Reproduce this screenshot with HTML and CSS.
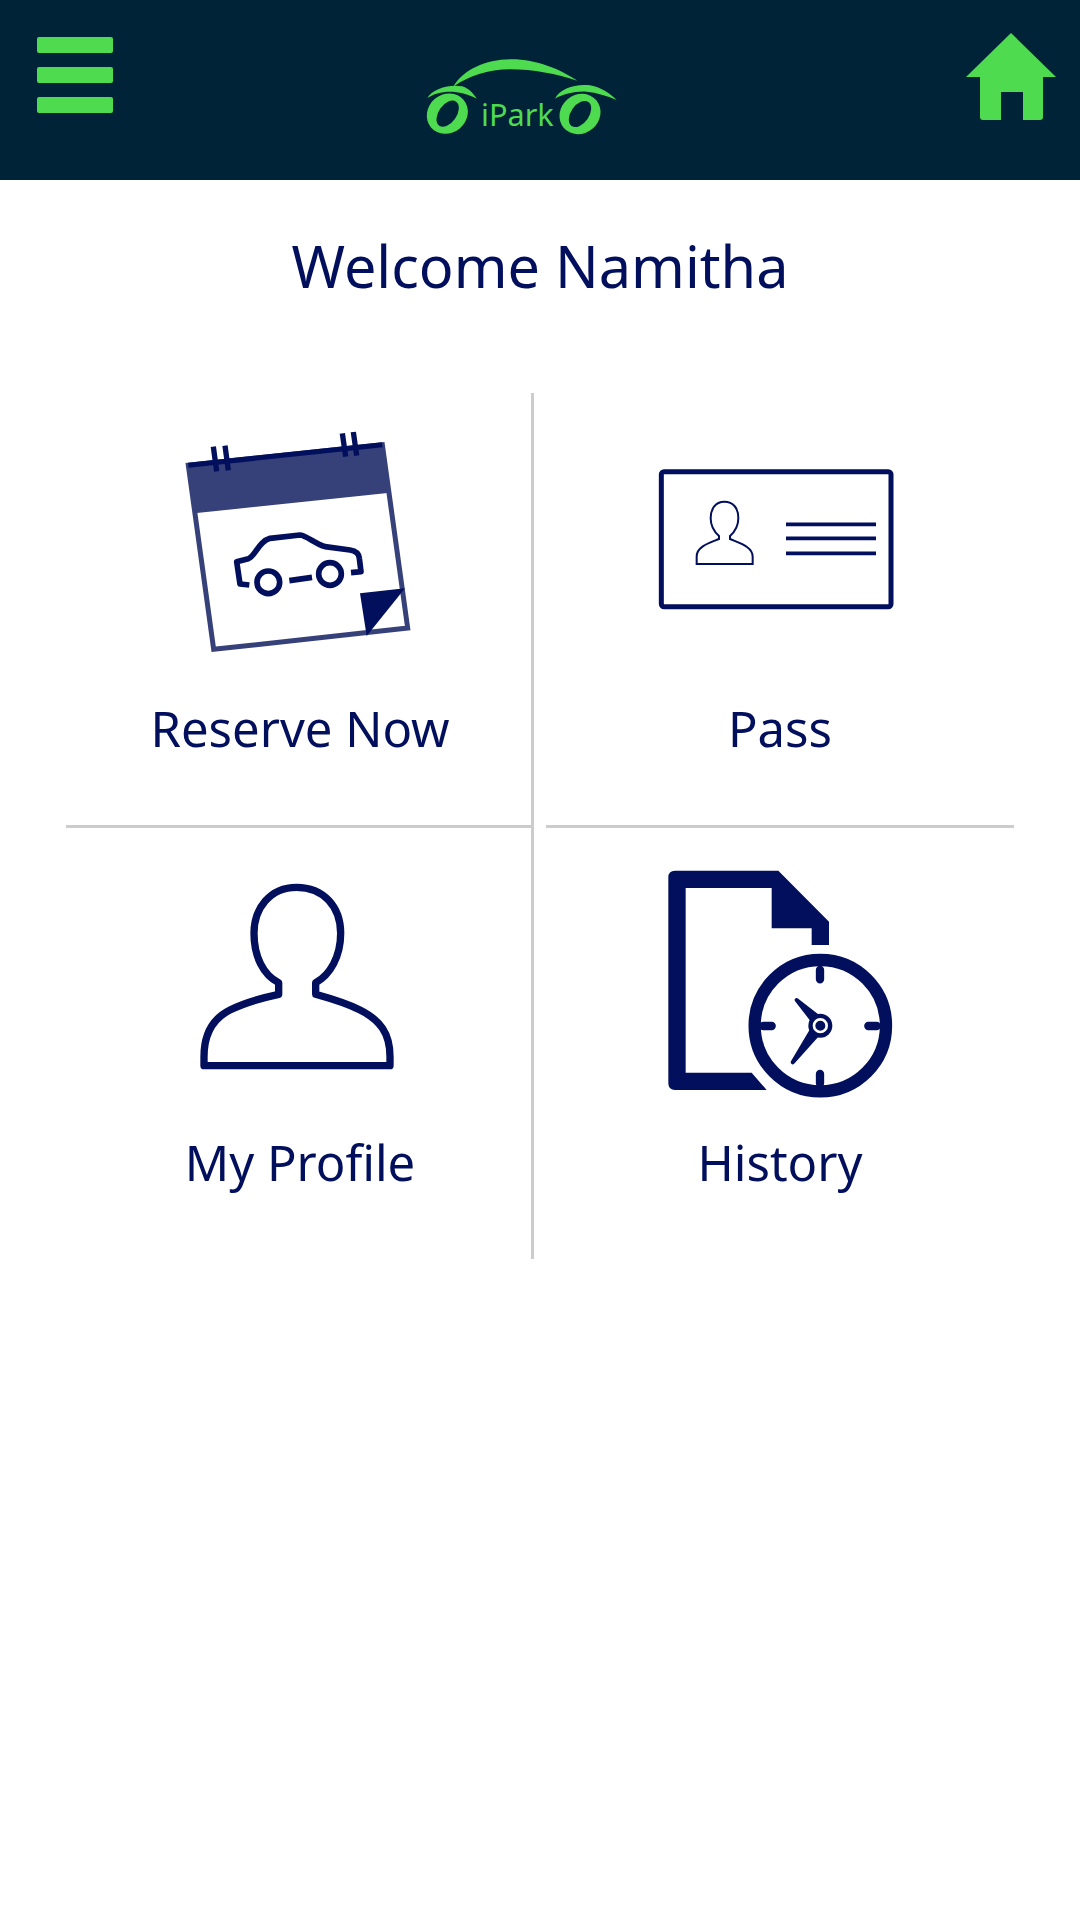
FILE: index.html
```html
<!DOCTYPE html>
<html lang="en">
<head>
    <meta charset="UTF-8">
    <meta name="viewport" content="width=device-width, initial-scale=1.0">
    <title>iPark</title>
    <link rel="stylesheet" href="styles.css">
</head>
<body>
    <header class="topbar">
        <div class="burger">
            <span></span>
            <span></span>
            <span></span>
        </div>
        <svg class="logo" viewBox="0 0 720 330">
            <path class="logo-green" d="M160 140C190 88 260 58 335 58C410 58 480 88 532 122C470 102 400 88 330 88C265 88 205 108 160 140Z"/>
            <path class="logo-green" d="M82 174C98 146 150 132 186 139C205 144 220 160 230 176C205 162 175 155 150 155C122 155 100 162 82 174Z"/>
            <path class="logo-green" d="M465 176C480 144 530 130 570 136C605 143 630 160 650 180C620 167 590 158 560 155C525 153 490 162 465 176Z"/>
            <ellipse class="logo-green" cx="142" cy="221" rx="64" ry="58" transform="rotate(-40 142 221)"/>
            <ellipse class="logo-hole" cx="143" cy="221" rx="44" ry="27" transform="rotate(-55 143 221)"/>
            <ellipse class="logo-green" cx="540" cy="222" rx="64" ry="58" transform="rotate(-40 540 222)"/>
            <ellipse class="logo-hole" cx="540" cy="222" rx="44" ry="27" transform="rotate(-55 540 222)"/>
            <text class="logo-text" x="243" y="258">iPark</text>
        </svg>
        <svg class="home" viewBox="0 0 90 87">
            <path d="M45 0L90 44H77V84Q77 87 74 87H57V59H35V87H17Q14 87 14 84V44H0Z"/>
        </svg>
    </header>

    <main class="content">
        <h1>Welcome Namitha</h1>
        <div class="tiles">
            <a class="tile tile-top tile-left">
                <svg class="icon-wide" viewBox="0 0 840 780">
                    <path d="M103 310L690 248L667 104L85 166Z" fill="#364079"/>
                    <path d="M85 166L161 718L743 654L667 104Z" fill="none" stroke="#364079" stroke-width="15"/>
                    <path d="M85 166L667 104" fill="none" stroke="#010f5c" stroke-width="15"/>
                    <path d="M160 110L170 184M195 107L205 181M547 70L557 140M580 66L590 137" fill="none" stroke="#010f5c" stroke-width="16"/>
                    <path d="M268 525L240 522L230 455L265 446C285 440 295 395 330 385L420 375C435 375 465 400 495 410L570 420C590 423 597 432 598 445L603 485L573 488" fill="none" stroke="#010f5c" stroke-width="17" stroke-linejoin="round"/>
                    <circle cx="325" cy="517" r="34" fill="none" stroke="#010f5c" stroke-width="17"/>
                    <circle cx="510" cy="492" r="34" fill="none" stroke="#010f5c" stroke-width="17"/>
                    <path d="M388 512L456 502" fill="none" stroke="#010f5c" stroke-width="17"/>
                    <path d="M600 550L735 535L620 678Z" fill="#010f5c"/>
                </svg>
                <span class="tile-label">Reserve Now</span>
            </a>
            <a class="tile tile-top">
                <svg class="icon-wide" viewBox="0 -120 840 780">
                    <rect x="64" y="65" width="689" height="405" rx="8" fill="none" stroke="#010f5c" stroke-width="15"/>
                    <path d="M170 342H338V320C338 290 300 280 270 267V258C285 245 295 225 295 205C295 175 280 155 253 155C225 155 212 178 212 205C212 225 222 245 237 258V267C205 280 170 290 170 320Z" fill="none" stroke="#010f5c" stroke-width="6"/>
                    <path d="M438 223H708M438 265H708M438 310H708" fill="none" stroke="#010f5c" stroke-width="11"/>
                </svg>
                <span class="tile-label">Pass</span>
            </a>
            <a class="tile tile-bottom tile-left">
                <svg class="icon-person" viewBox="0 0 720 720">
                    <path d="M72 617H630V590C630 520 600 480 540 450C500 430 450 415 407 403V368C450 345 482 290 482 220C482 140 430 82 350 82C270 82 222 145 222 220C222 290 250 345 296 368V403C240 415 190 430 150 450C100 475 72 520 72 590Z" fill="none" stroke="#010f5c" stroke-width="22" stroke-linejoin="round"/>
                </svg>
                <span class="tile-label">My Profile</span>
            </a>
            <a class="tile tile-bottom">
                <svg class="icon-history" viewBox="0 0 780 720">
                    <path d="M75 32H385L537 185V255H485V205H365V84H107V638H305L350 690H75Q55 690 55 670V52Q55 32 75 32Z" fill="#010f5c"/>
                    <circle cx="511" cy="497" r="197" fill="none" stroke="#010f5c" stroke-width="37"/>
                    <path d="M510 330V358M510 642V670M340 498H365M655 498H680" fill="none" stroke="#010f5c" stroke-width="25" stroke-linecap="round"/>
                    <path d="M440 420L488 482L502 468Z" fill="#010f5c" stroke="#010f5c" stroke-width="12" stroke-linejoin="round"/>
                    <path d="M428 607L484 512L500 527Z" fill="#010f5c" stroke="#010f5c" stroke-width="12" stroke-linejoin="round"/>
                    <circle cx="511" cy="497" r="36" fill="#010f5c"/>
                    <circle cx="511" cy="497" r="19" fill="none" stroke="#fff" stroke-width="8"/>
                </svg>
                <span class="tile-label">History</span>
            </a>
        </div>
    </main>
</body>
</html>
```

FILE: styles.css
```css
body {
    font-family: "Noto Sans", sans-serif;
    margin: 0;
    background-color: #fff;
    color: #010f5c;
}
.topbar {
    display: flex;
    align-items: flex-start;
    height: 180px;
    background-color: #012337;
}
.burger {
    display: flex;
    flex-direction: column;
    gap: 14px;
    width: 76px;
    margin: 37px 0 0 37px;
}
.burger span {
    height: 16px;
    background-color: #4fdb50;
    border-radius: 2px;
}
.logo {
    width: 240px;
    height: 110px;
    margin: 40px auto 0 287px;
}
.logo-green {
    fill: #4fdb50;
}
.logo-hole {
    fill: #012337;
}
.logo-text {
    font-size: 92px;
    fill: #4fdb50;
}
.home {
    width: 90px;
    height: 87px;
    margin: 33px 24px 0 0;
    fill: #4fdb50;
}
.content {
    padding: 0 66px;
}
h1 {
    margin: 51px 0 92px;
    font-size: 57.6px;
    font-weight: 400;
    line-height: 70px;
    text-align: center;
}
.tiles {
    display: grid;
    grid-template-columns: 1fr 1fr;
    column-gap: 12px;
}
.tile {
    display: flex;
    flex-direction: column;
    align-items: center;
}
.tile-top {
    height: 435px;
    padding-top: 17px;
    box-sizing: border-box;
    border-bottom: 3px solid #ccc;
}
.tile-bottom {
    height: 431px;
    padding-top: 32px;
    box-sizing: border-box;
}
.tile-left {
    position: relative;
}
.tile-left::after {
    content: "";
    position: absolute;
    top: 0;
    right: 0;
    bottom: -3px;
    width: 3px;
    background-color: #ccc;
}
.tile-bottom.tile-left::after {
    bottom: 0;
}
.icon-wide {
    width: 280px;
    height: 260px;
}
.icon-person {
    width: 240px;
    height: 240px;
}
.icon-history {
    width: 260px;
    height: 240px;
}
.tile-label {
    font-size: 49px;
    line-height: 60px;
}
.tile-top .tile-label {
    margin-top: 28px;
}
.tile-bottom .tile-label {
    margin-top: 32px;
}
```
